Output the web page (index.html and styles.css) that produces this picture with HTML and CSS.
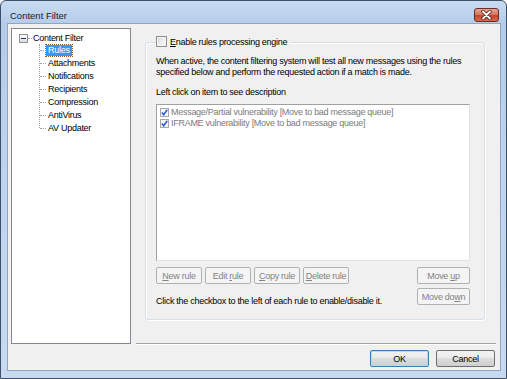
FILE: index.html
```html
<!DOCTYPE html>
<html>
<head>
<link rel="stylesheet" href="styles.css">
</head>
<body>

<div class="window">
  <div class="titlebar">
    <span class="title">Content Filter</span>
    <div class="close">
      <svg width="13" height="10" viewBox="0 0 13 10">
        <path d="M3 1.5 L10 8.5 M10 1.5 L3 8.5" stroke="#5a1a10" stroke-width="3.4" stroke-linecap="round"/>
        <path d="M3 1.5 L10 8.5 M10 1.5 L3 8.5" stroke="#fff" stroke-width="1.8" stroke-linecap="round"/>
      </svg>
    </div>
  </div>

  <div class="client">
    <div class="main">
      <div class="tree">
        <div class="node root"><span class="expander"></span><span class="stub"></span><span>Content Filter</span></div>
        <div class="children">
          <div class="node"><span class="sel">Rules</span></div>
          <div class="node"><span>Attachments</span></div>
          <div class="node"><span>Notifications</span></div>
          <div class="node"><span>Recipients</span></div>
          <div class="node"><span>Compression</span></div>
          <div class="node"><span>AntiVirus</span></div>
          <div class="node"><span>AV Updater</span></div>
        </div>
      </div>

      <div class="panel">
        <div class="group">
          <div class="legend"><span class="checkbox"></span><span><u>E</u>nable rules processing engine</span></div>
          <p class="desc">When active, the content filtering system will test all new messages using the rules specified below and perform the requested action if a match is made.</p>
          <p class="hint">Left click on item to see description</p>
          <div class="list">
            <div class="item"><span class="mini-check"><svg width="7" height="7" viewBox="0 0 7 7"><path d="M0.8 3.5 L2.7 5.8 L6.2 0.8" stroke="#2a5ad6" stroke-width="1.5" fill="none"/></svg></span><span>Message/Partial vulnerability [Move to bad message queue]</span></div>
            <div class="item"><span class="mini-check"><svg width="7" height="7" viewBox="0 0 7 7"><path d="M0.8 3.5 L2.7 5.8 L6.2 0.8" stroke="#2a5ad6" stroke-width="1.5" fill="none"/></svg></span><span>IFRAME vulnerability [Move to bad message queue]</span></div>
          </div>
          <div class="actions">
            <div class="left">
              <div class="btn-row">
                <div class="btn off w46"><span><u>N</u>ew rule</span></div>
                <div class="btn off w46"><span>Edit <u>r</u>ule</span></div>
                <div class="btn off w46"><span><u>C</u>opy rule</span></div>
                <div class="btn off w46"><span><u>D</u>elete rule</span></div>
              </div>
              <p class="note">Click the checkbox to the left of each rule to enable/disable it.</p>
            </div>
            <div class="right">
              <div class="btn off w53"><span>Move <u>u</u>p</span></div>
              <div class="btn off w53"><span>Move do<u>w</u>n</span></div>
            </div>
          </div>
        </div>
      </div>
    </div>

    <div class="footer">
      <div class="btn push default"><span>OK</span></div>
      <div class="btn push"><span>Cancel</span></div>
    </div>
  </div>
</div>

</body>
</html>
```

FILE: styles.css
```css
body {
  margin: 0;
  width: 507px;
  height: 379px;
  overflow: hidden;
  font-family: "Liberation Sans", Arial, sans-serif;
  font-size: 9px;
  letter-spacing: -0.28px;
  color: #000;
}

.window {
  box-sizing: border-box;
  width: 507px;
  height: 379px;
  border: 1px solid #3d5068;
  border-radius: 6px 6px 0 0;
  background: linear-gradient(#c8dbf1, #b4cce9 24px, #bcd2ec 120px, #c7daf0);
  display: flex;
  flex-direction: column;
}

.titlebar {
  height: 22px;
  display: flex;
  justify-content: space-between;
  padding: 0 7px 0 9px;
}

.title {
  font-size: 9.5px;
  letter-spacing: 0;
  color: #1a1a1a;
  padding-top: 9px;
}

.close {
  box-sizing: border-box;
  width: 25px;
  height: 14px;
  margin-top: 7px;
  border: 1px solid #6b2a22;
  border-radius: 3px;
  background: linear-gradient(#e8a493, #d27a63 45%, #c0462c 55%, #d46e52);
  display: flex;
  align-items: center;
  justify-content: center;
}

.client {
  flex: 1;
  margin: 0 5px 7px 6px;
  border: 1px solid #8fa6c3;
  background: #f0f0f0;
  display: flex;
  flex-direction: column;
}

.main {
  display: flex;
  padding: 4px 0 0 3px;
}

/* tree */
.tree {
  box-sizing: border-box;
  width: 120px;
  height: 316px;
  border: 1px solid #828790;
  background: #fff;
  padding: 3px 0 0 7px;
}

.node {
  height: 13px;
  line-height: 13px;
  display: flex;
  align-items: center;
  white-space: nowrap;
}

.root {
  height: 12px;
}

.expander {
  box-sizing: border-box;
  width: 9px;
  height: 9px;
  border: 1px solid #919191;
  background: linear-gradient(#fff, #dcdcdc);
  position: relative;
}

.expander::after {
  content: "";
  position: absolute;
  left: 1px;
  top: 3px;
  width: 5px;
  height: 1px;
  background: #1e3a6e;
}

.stub {
  width: 4px;
  border-top: 1px dotted #a0a0a0;
  margin-right: 1px;
}

.children {
  margin-left: 20px;
  border-left: 1px dotted #a0a0a0;
  height: 84px;
}

.children .node {
  position: relative;
  padding-left: 8px;
}

.children .node::before {
  content: "";
  position: absolute;
  left: 0;
  top: 6px;
  width: 6px;
  border-top: 1px dotted #a0a0a0;
}

.sel {
  background: #3399ff;
  color: #fff;
  outline: 1px dotted #8a5a1a;
  padding: 0 2px;
  margin-left: -2px;
  line-height: 11px;
}

/* right panel */
.panel {
  box-sizing: border-box;
  width: 360px;
  height: 316px;
  margin-left: 5px;
  padding: 14px 0 0 9px;
  border-bottom: 1px solid #a0a0a0;
  box-shadow: 0 1px 0 #fff;
}

.group {
  box-sizing: border-box;
  width: 340px;
  height: 278px;
  border: 1px solid #d5dfe5;
  border-radius: 3px;
  box-shadow: inset 1px 1px 0 #fff, 1px 1px 0 #fff;
  padding: 0 14px 0 10px;
}

.legend {
  display: flex;
  align-items: center;
  gap: 3px;
  margin-top: -7px;
  width: max-content;
  background: #f0f0f0;
  padding-right: 4px;
}

.checkbox {
  box-sizing: border-box;
  width: 11px;
  height: 11px;
  border: 1px solid #8e8f8f;
  background: linear-gradient(135deg, #dcdcdc, #fbfbfb);
  box-shadow: inset 0 0 0 1px #f4f4f4;
}

.desc {
  margin: 9px 0 0;
  line-height: 11px;
}

.hint {
  margin: 9px 0 0;
  line-height: 11px;
}

.list {
  box-sizing: border-box;
  height: 157px;
  margin-top: 6px;
  width: 314px;
  border: 1px solid;
  border-color: #a0a0a0 #e3e3e3 #e3e3e3 #a0a0a0;
  background: #fff;
  padding: 2px 0 0 3px;
}

.item {
  height: 11px;
  line-height: 11px;
  display: flex;
  align-items: center;
  gap: 2px;
  color: #7a7a7a;
  white-space: nowrap;
}

.mini-check {
  box-sizing: border-box;
  width: 9px;
  height: 9px;
  border: 1px solid #a8a8a8;
  background: #f6f6f6;
  display: flex;
  align-items: center;
  justify-content: center;
}

.actions {
  display: flex;
  justify-content: space-between;
  width: 314px;
  margin-top: 6px;
}

.btn-row {
  display: flex;
  gap: 3px;
}

.btn {
  box-sizing: border-box;
  height: 17px;
  border-radius: 2px;
  display: flex;
  align-items: center;
  justify-content: center;
  white-space: nowrap;
}

.off {
  border: 1px solid #adb2b5;
  background: #f4f4f4;
  color: #838383;
}

.w46 {
  width: 46px;
}

.w53 {
  width: 53px;
}

.right {
  display: flex;
  flex-direction: column;
  gap: 4px;
}

.note {
  margin: 12px 0 0;
  line-height: 11px;
}

/* footer buttons */
.footer {
  display: flex;
  justify-content: flex-end;
  gap: 7px;
  padding: 6px 5px 0 0;
}

.push {
  width: 59px;
  border: 1px solid #707070;
  background: linear-gradient(#f2f2f2, #ebebeb 45%, #dddddd 50%, #cfcfcf);
  color: #000;
}

.default {
  border-color: #3c7fb1;
  box-shadow: inset 0 0 0 1px #a9e0f9;
}
```
